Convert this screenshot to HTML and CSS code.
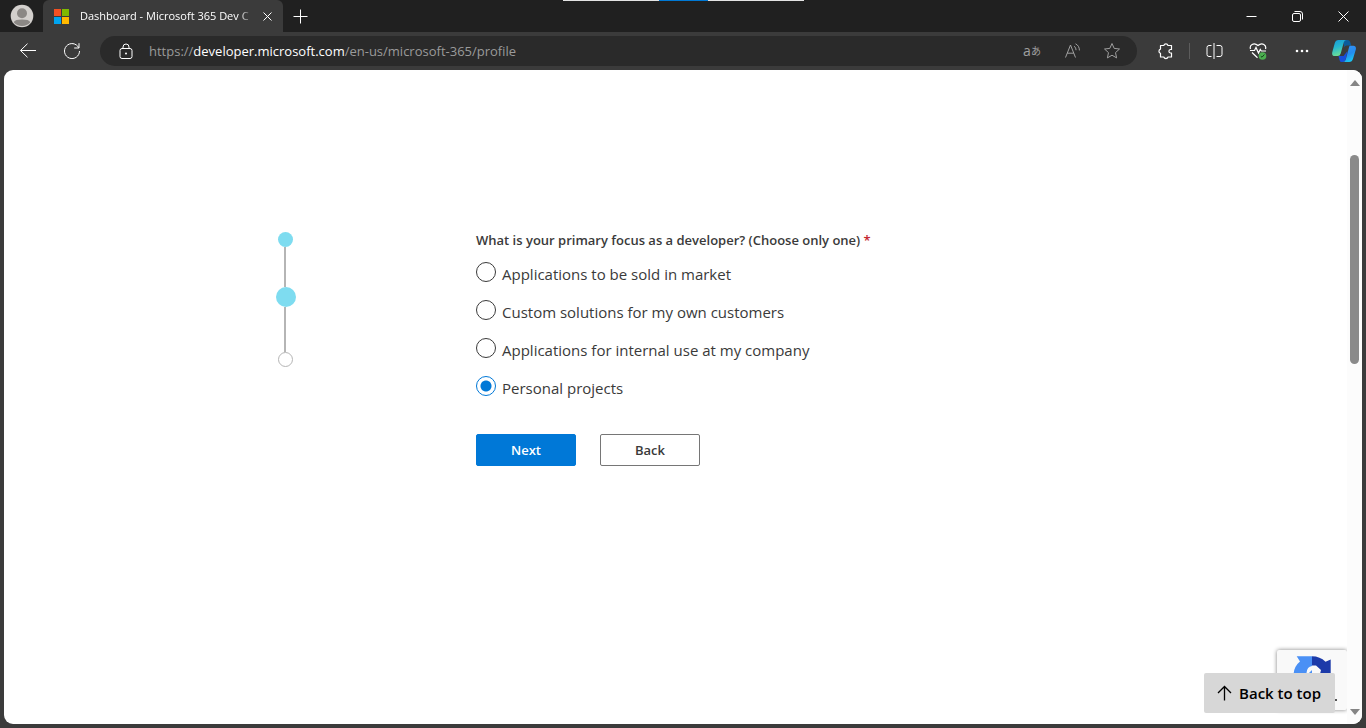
FILE: index.html
```html
<!DOCTYPE html>
<html lang="en">
<head>
<meta charset="utf-8">
<meta name="viewport" content="width=device-width, initial-scale=1">
<title>Dashboard - Microsoft 365 Dev Center</title>
<link rel="stylesheet" href="styles.css">
</head>
<body>
<div class="browser">
  <header class="titlebar">
    <button class="profile" aria-label="Profile">
      <svg width="24" height="24" viewBox="0 0 24 24"><circle cx="12" cy="12" r="11.3" fill="#d3d0cd"/><circle cx="12" cy="9.3" r="5" fill="#8b8885"/><path d="M3.7 18.2c1-2.2 3.800-2.800 8.300-2.800s7.300.6 8.300 2.800a11 11 0 0 1-16.600 0z" fill="#8b8885"/></svg>
    </button>
    <div class="tab">
      <svg width="15" height="15" viewBox="0 0 15 15"><path fill="#f25022" d="M0 0h7v7H0z"/><path fill="#7fba00" d="M8 0h7v7H8z"/><path fill="#00a4ef" d="M0 8h7v7H0z"/><path fill="#ffb900" d="M8 8h7v7H8z"/></svg>
      <span class="tab-title">Dashboard - Microsoft 365 Dev C</span>
      <button class="tab-close" aria-label="Close tab"><svg width="9" height="9" viewBox="0 0 9 9" class="line"><path d="M.5.5l8 8M8.500.5l-8 8"/></svg></button>
    </div>
    <button class="new-tab" aria-label="New tab"><svg width="15" height="15" viewBox="0 0 15 15" class="line"><path d="M7.500.5v14M.5 7.500h14"/></svg></button>
    <div class="top-indicator"></div>
    <div class="window-controls">
      <button aria-label="Minimize"><svg width="11" height="11" viewBox="0 0 11 11" class="line"><path d="M.5 5.500h10"/></svg></button>
      <button aria-label="Restore"><svg width="11" height="11" viewBox="0 0 11 11" class="line"><rect x=".5" y="2.500" width="8" height="8" rx="1.500"/><path d="M2.500.5H8a2.500 2.500 0 0 1 2.500 2.500v5.500"/></svg></button>
      <button aria-label="Close"><svg width="11" height="11" viewBox="0 0 11 11" class="line"><path d="M.5.5l10 10M10.500.5l-10 10"/></svg></button>
    </div>
  </header>

  <nav class="toolbar">
    <button class="tool" aria-label="Back"><svg width="18" height="16" viewBox="0 0 18 16" class="line"><path d="M17 7.500H1.500M8.500.7L1.500 7.500l7 6.800"/></svg></button>
    <button class="tool" aria-label="Refresh"><svg width="18" height="18" viewBox="0 0 18 18" class="line"><path d="M15.700 5.700A7.500 7.500 0 1 0 16.500 9M16 1.200v4.800h-4.800"/></svg></button>
    <div class="address">
      <button class="lock" aria-label="Site information"><svg width="14" height="17" viewBox="0 0 14 17" class="line"><rect x="1" y="5.500" width="12" height="10" rx="2"/><path d="M4 5.500V4a3 3 0 0 1 6 0v1.500"/><circle cx="7" cy="10.500" r="1" fill="#fff" stroke="none"/></svg></button>
      <div class="url" role="textbox" aria-label="Address bar">https://<b>developer.microsoft.com</b>/en-us/microsoft-365/profile</div>
      <button class="addr-tool translate" aria-label="Translate">a<small lang="ja">あ</small></button>
      <button class="addr-tool" aria-label="Read aloud"><svg width="18" height="16" viewBox="0 0 18 16" class="line"><path d="M2.500 14.500L7.500 2l5 12.500M4.200 10.200h6.600M11 3.200c1.400.9 2 2.200 2 4M12.500.8c2.600 1.300 3.900 3.500 3.900 6.600"/></svg></button>
      <button class="addr-tool" aria-label="Add to favorites"><svg width="18" height="18" viewBox="0 0 18 18" class="line"><path stroke-linejoin="round" d="M9 1.500l2.200 4.900 5.300.6-4 3.600 1.100 5.300L9 13.200l-4.600 2.700 1.100-5.300-4-3.600 5.300-.6z"/></svg></button>
    </div>
    <button class="tool" aria-label="Extensions"><svg width="17" height="18" viewBox="0 0 17 18" class="line bold"><path stroke-linejoin="round" d="M3.500 3.500h3.300a2.200 2.200 0 0 1 4.200 0h3.500v4h-1.200a1.800 1.800 0 0 0 0 3.500h1.200v4H11a2.200 2.200 0 0 1-4.200 0H3.500v-3.700a2.200 2.200 0 0 1 0-4.200z"/></svg></button>
    <span class="divider"></span>
    <button class="tool" aria-label="Split screen"><svg width="17" height="16" viewBox="0 0 17 16" class="line"><path d="M5.500 2.500H3a2 2 0 0 0-2 2v7a2 2 0 0 0 2 2h2.500M10.500 2.500H14a2 2 0 0 1 2 2v7a2 2 0 0 1-2 2h-3.500M8 0v16"/></svg></button>
    <button class="tool" aria-label="Browser essentials"><svg width="18" height="18" viewBox="0 0 18 18" class="line"><path d="M1.500 7C.2 3.300 4.600-.3 9 3.500c4.400-3.800 8.700-.2 7.500 3.500M3 10.500l5.500 5.300M1 8.500h4.500l1.500-3 2.500 5.500 1.800-3.500 1 1.500H17" stroke-width="1.200"/><circle cx="13.500" cy="14" r="3.800" fill="#4caf50" stroke="none"/><path d="M11.800 14.200l1.200 1 2.400-2.700" stroke="#16431d"/></svg></button>
    <button class="tool" aria-label="Settings and more"><svg width="14" height="4" viewBox="0 0 14 4" fill="#fff"><circle cx="2" cy="2" r="1.300"/><circle cx="7" cy="2" r="1.300"/><circle cx="12" cy="2" r="1.300"/></svg></button>
    <button class="tool copilot" aria-label="Copilot"><svg width="24" height="24" viewBox="0 0 24 24">
      <defs>
        <linearGradient id="cpl" x1="0" y1="0" x2=".3" y2="1"><stop offset="0" stop-color="#169ad8"/><stop offset=".5" stop-color="#27b8cf"/><stop offset="1" stop-color="#6bdc96"/></linearGradient>
        <linearGradient id="cpr" x1="0" y1="0" x2=".4" y2="1"><stop offset="0" stop-color="#3992f5"/><stop offset=".6" stop-color="#248cf0"/><stop offset="1" stop-color="#19c4f2"/></linearGradient>
      </defs>
      <path d="M11 1h4.500q2 0 2.700 2l1 3.500h-4.500q-1.700 0-2.200 2z" fill="#0b5c9c"/>
      <path d="M6.500 17h5l4-5-2 9q-.6 2-2.500 2H9.500q-1.400 0-1.800-1.500z" fill="#174edb"/>
      <path d="M6.500 1h8q-2 0-2.700 2.200L8.700 14.500Q8 17 5.500 17H2.800Q-.3 17 .2 13.500L2.800 4Q3.700 1 6.500 1z" fill="url(#cpl)"/>
      <path d="M17.800 6.800h3.500q3 0 2.600 3.500l-2.800 9.200q-1 3.500-4 3.500H11q2 0 2.700-2.300l3-11.200q.6-2.700 1.100-2.700z" fill="url(#cpr)"/>
    </svg></button>
  </nav>

  <div class="viewport">
    <main class="page">
      <div class="stepper" aria-label="Step 2 of 3">
        <span class="dot done"></span><span class="track"></span>
        <span class="dot current"></span><span class="track last"></span>
        <span class="dot"></span>
      </div>
      <form class="survey">
        <fieldset>
          <legend>What is your primary focus as a developer? (Choose only one) <span class="required">*</span></legend>
          <label><input type="radio" name="focus"><span>Applications to be sold in market</span></label>
          <label><input type="radio" name="focus"><span>Custom solutions for my own customers</span></label>
          <label><input type="radio" name="focus"><span>Applications for internal use at my company</span></label>
          <label><input type="radio" name="focus" checked><span>Personal projects</span></label>
        </fieldset>
        <div class="actions">
          <button type="button" class="btn primary">Next</button>
          <button type="button" class="btn">Back</button>
        </div>
      </form>
    </main>
    <div class="captcha">
      <svg width="38" height="38" viewBox="0 0 38 38"><path fill="#4a90f5" d="M3.700.3H19V10q-5 .5-5.500 7H.7Q1.500 10 7 5.500z"/><path fill="#1c3aa9" d="M19 .3q8 0 13.500 5.500L37.700 3.500V18H27l1-4-5-4.500h-4z"/><path fill="#4a90f5" d="M16 17l3-3v3z"/></svg>
      <span class="captcha-mark"></span>
    </div>
    <a class="to-top" href="#"><svg width="15" height="16" viewBox="0 0 15 16"><path d="M7.500 15.500v-14M1 8l6.500-6.500L14 8" fill="none" stroke="#000" stroke-width="1.300"/></svg>Back to top</a>
    <div class="scrollbar" aria-hidden="true">
      <span class="arrow up"></span><span class="thumb"></span><span class="arrow down"></span>
    </div>
  </div>
</div>
</body>
</html>
```
FILE: styles.css
```css
* { box-sizing: border-box; }
body {
  margin: 0;
  background: #3b3b3b;
  font-family: "Open Sans", "Noto Sans", sans-serif;
  color: #3a3a3a;
}
button { padding: 0; border: 0; background: none; color: inherit; font-family: inherit; }
svg { display: block; flex: none; }
.line { fill: none; stroke: #fff; stroke-width: 1; }
.line.bold { stroke-width: 1.2; }

.browser { min-height: 100vh; display: flex; flex-direction: column; }

.titlebar { position: relative; display: flex; height: 32px; background: #202020; }
.titlebar button { display: flex; align-items: center; justify-content: center; }
.profile { width: 43px; }
.tab {
  display: flex;
  align-items: center;
  width: 240px;
  padding: 0 8px 0 11px;
  border-radius: 6px 6px 0 0;
  background: #3b3b3b;
}
.tab-title {
  flex: 1;
  margin-left: 11px;
  white-space: nowrap;
  font-size: 11px;
  line-height: 16px;
  color: #fff;
  -webkit-mask-image: linear-gradient(to right, #000 160px, transparent 172px);
  mask-image: linear-gradient(to right, #000 160px, transparent 172px);
}
.tab-close { width: 16px; height: 16px; margin-left: 4px; }
.new-tab { width: 35px; }
.window-controls { display: flex; margin-left: auto; }
.window-controls button { width: 46px; }
.top-indicator {
  position: absolute;
  top: 0;
  left: 50%;
  width: 241px;
  height: 1px;
  margin-left: -120px;
  background: linear-gradient(to right, #e3e3e3 40%, #0078d4 40% 60%, #e3e3e3 60%);
}

.toolbar { display: flex; align-items: center; height: 38px; padding: 0 2px 0 6px; }
.tool { display: flex; align-items: center; justify-content: center; width: 44px; height: 32px; }
.tool.copilot { width: 40px; }
.address {
  flex: 1;
  display: flex;
  align-items: center;
  height: 30px;
  margin: 0 6px;
  padding: 0 5px 0 14px;
  border-radius: 15px;
  background: #2a2a2a;
}
.lock { width: 24px; display: flex; justify-content: center; }
.url { flex: 1; margin-left: 11px; font-size: 13px; line-height: 18px; color: #9a9a9a; white-space: nowrap; }
.url b { font-weight: 400; color: #fff; }
.addr-tool { display: flex; align-items: center; justify-content: center; width: 40px; height: 28px; color: #a0a0a0; }
.addr-tool .line { stroke: #a0a0a0; }
.translate { font-size: 14px; line-height: 16px; }
.translate small { font-family: "Noto Sans CJK JP", sans-serif; font-size: 10px; }
.divider { width: 1px; height: 16px; margin: 0 2px; background: #5c5c5c; }

.viewport {
  flex: 1;
  position: relative;
  display: flex;
  margin: 0 4px 4px;
  border-radius: 9px;
  overflow: hidden;
  background: #fff;
}
.page { flex: 1; display: flex; align-items: flex-start; padding: 162px 24px 24px 272px; }

.stepper { display: flex; flex-direction: column; align-items: center; width: 20px; margin-right: 180px; }
.dot { width: 15px; height: 15px; margin-right: 1px; border: 1px solid #b5b5b5; border-radius: 50%; }
.dot.done { border: 0; background: #7edcf0; }
.dot.current { width: 20px; height: 20px; margin: 0; border: 0; background: #7edcf0; }
.track { width: 2px; height: 40px; margin-right: 2px; background: #b5b5b5; }
.track.last { height: 45px; }

fieldset { margin: 0; padding: 0; border: 0; }
legend { padding: 0; margin-bottom: 14px; font-size: 13px; font-weight: 600; line-height: 16px; }
.required { color: #c4262e; }
.survey label { display: flex; width: fit-content; height: 38px; font-size: 15px; line-height: 24px; }
.survey input {
  appearance: none;
  width: 20px;
  height: 20px;
  margin: 0 6px 0 0;
  border: 1px solid #3a3a3a;
  border-radius: 50%;
}
.survey input:checked { border-color: #0078d7; background: radial-gradient(circle, #0078d7 5px, #fff 6px); }
.actions { display: flex; gap: 24px; margin-top: 20px; }
.btn {
  width: 100px;
  height: 32px;
  border: 1px solid #767676;
  border-radius: 2px;
  font-size: 13px;
  font-weight: 600;
  line-height: 18px;
}
.btn.primary { border-color: #0078d7; background: #0078d7; color: #fff; }

.captcha {
  position: absolute;
  right: 15px;
  bottom: 14px;
  width: 70px;
  height: 60px;
  padding: 6px 0 0 16px;
  border-radius: 2px;
  background: #f9f9f9;
  box-shadow: 0 0 4px #808080;
  overflow: hidden;
}
.captcha-mark { display: block; width: 2px; height: 2px; margin: 5px 0 0 42px; background: #555; }
.to-top {
  position: absolute;
  right: 27px;
  bottom: 11px;
  display: flex;
  align-items: center;
  gap: 7px;
  height: 40px;
  padding: 0 14px 0 13px;
  border-radius: 2px;
  background: #d7d7d7;
  color: #000;
  font-size: 15px;
  font-weight: 600;
  line-height: 20px;
  text-decoration: none;
}
.scrollbar {
  position: relative;
  display: flex;
  flex-direction: column;
  align-items: center;
  width: 15px;
  padding: 10px 0 9px;
  background: #fcfcfc;
}
.arrow { width: 0; border: 5px solid transparent; }
.up { border-top: 0; border-bottom: 6px solid #858585; }
.down { margin-top: auto; border-bottom: 0; border-top: 6px solid #858585; }
.thumb { width: 9px; height: 209px; margin-top: 69px; border-radius: 5px; background: #8a8a8a; }
```
